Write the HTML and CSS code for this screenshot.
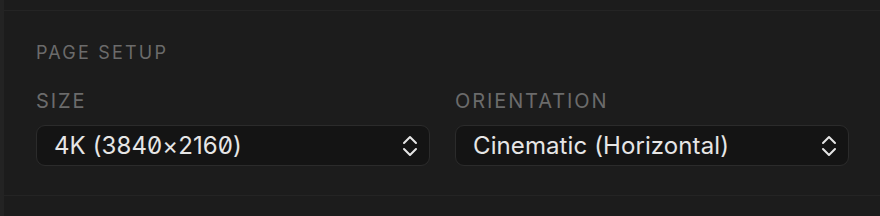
FILE: index.html
```html
<!DOCTYPE html>
<html>
<head>
<title>Page setup</title>
<meta charset="utf-8">
<link rel="stylesheet" href="styles.css">
</head>
<body>
  <div id="panel">
    <div class="section">
      <div class="sectionTitle">PAGE SETUP</div>
      <div class="fieldRow">
        <div class="field">
          <div class="fieldLabel">SIZE</div>
          <div class="select">
            <span class="selectValue">4K (3840×2160)</span>
            <svg class="chevrons" width="16" height="22" viewBox="0 0 16 22">
              <path d="M2 8 L8 2 L14 8" />
              <path d="M2 14 L8 20 L14 14" />
            </svg>
          </div>
        </div>
        <div class="field">
          <div class="fieldLabel">ORIENTATION</div>
          <div class="select">
            <span class="selectValue">Cinematic (Horizontal)</span>
            <svg class="chevrons" width="16" height="22" viewBox="0 0 16 22">
              <path d="M2 8 L8 2 L14 8" />
              <path d="M2 14 L8 20 L14 14" />
            </svg>
          </div>
        </div>
      </div>
    </div>
  </div>
</body>
</html>
```

FILE: styles.css
```css
body {margin: 0; background-color: #1c1c1c;
      font-family: Inter, "Noto Sans", sans-serif;
}
#panel {height: 216px; border-left: 4px solid #232323;
        padding-top: 10px; box-sizing: border-box;
}
.section {padding: 31px 31px 29px 32px;
          border-top: 1px solid #242424; border-bottom: 1px solid #242424;
}
.sectionTitle {font-size: 18px; line-height: 22px; letter-spacing: 2.2px;
               color: #6b6b6b; margin-bottom: 25px;
}
.fieldRow {display: grid; grid-template-columns: 1fr 1fr; gap: 25px;}
.fieldLabel {font-size: 20px; line-height: 24px; letter-spacing: 1.9px;
             color: #6b6b6b; margin-bottom: 12px;
}
.select {height: 41px; box-sizing: border-box;
         display: flex; align-items: center; justify-content: space-between;
         padding: 0 11px 0 17px;
         background-color: #141414; border: 1px solid #2b2b2b; border-radius: 9px;
}
.selectValue {font-size: 24px; color: #e6e6e6; letter-spacing: 0.1px;
              font-variant-numeric: slashed-zero;
}
.chevrons {fill: none; stroke: #e6e6e6; stroke-width: 2; stroke-linecap: round; stroke-linejoin: round;}
```
